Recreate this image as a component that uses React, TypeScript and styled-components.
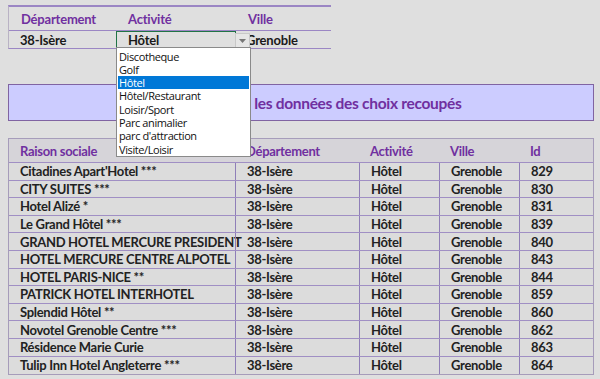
import React from "react";
import styled, { createGlobalStyle } from "styled-components";

const rows = [
  { name: "Citadines Apart'Hotel ***", id: 829 },
  { name: "CITY SUITES ***", id: 830 },
  { name: "Hotel Alizé *", id: 831 },
  { name: "Le Grand Hôtel ***", id: 839 },
  { name: "GRAND HOTEL MERCURE PRESIDENT", id: 840 },
  { name: "HOTEL MERCURE CENTRE ALPOTEL", id: 843 },
  { name: "HOTEL PARIS-NICE **", id: 844 },
  { name: "PATRICK HOTEL INTERHOTEL", id: 859 },
  { name: "Splendid Hôtel **", id: 860 },
  { name: "Novotel Grenoble Centre ***", id: 862 },
  { name: "Résidence Marie Curie", id: 863 },
  { name: "Tulip Inn Hotel Angleterre ***", id: 864 },
];

const choices = [
  "Discotheque",
  "Golf",
  "Hôtel",
  "Hôtel/Restaurant",
  "Loisir/Sport",
  "Parc animalier",
  "parc d'attraction",
  "Visite/Loisir",
];

function App() {
  return (
    <Sheet>
      <GlobalStyle />
      <Filters>
        <FilterHead>Département</FilterHead>
        <FilterHead>Activité</FilterHead>
        <FilterHead>Ville</FilterHead>
        <FilterCell>38-Isère</FilterCell>
        <FilterCell $active>
          Hôtel
          <DropButton>
            <svg width="7" height="4" viewBox="0 0 7 4">
              <path d="M0 0h7L3.5 4z" fill="#777" />
            </svg>
          </DropButton>
          <DropList>
            {choices.map((c) => (
              <DropItem key={c} $selected={c === "Hôtel"}>
                {c}
              </DropItem>
            ))}
          </DropList>
        </FilterCell>
        <FilterCell $tight>Grenoble</FilterCell>
      </Filters>

      <Banner>Extraire les données des choix recoupés</Banner>

      <Results>
        <Row $head>
          <Cell $head>Raison sociale</Cell>
          <Cell $head>Département</Cell>
          <Cell $head>Activité</Cell>
          <Cell $head>Ville</Cell>
          <Cell $head>Id</Cell>
        </Row>
        {rows.map((r) => (
          <Row key={r.id}>
            <Cell>{r.name}</Cell>
            <Cell $ruled>38-Isère</Cell>
            <Cell $ruled>Hôtel</Cell>
            <Cell $ruled>Grenoble</Cell>
            <Cell $ruled>{r.id}</Cell>
          </Row>
        ))}
      </Results>
    </Sheet>
  );
}

const GlobalStyle = createGlobalStyle`
  html, body {
    margin: 0;
    padding: 0;
    background: #dfdfdf;
  }
  body {
    font-family: Lato, "Liberation Sans", sans-serif;
  }
`;

const Sheet = styled.div`
  width: 600px;
  height: 379px;
  box-sizing: border-box;
  padding: 5px 6px 0 8px;
  display: flex;
  flex-direction: column;
  background: #dfdfdf;
  overflow: hidden;
`;

const Filters = styled.div`
  display: grid;
  grid-template-columns: 107px 120px 95px;
  grid-template-rows: 24px 17px;
  width: 322px;
  border-top: 2px solid #9b86c4;
  border-left: 1px solid #b9b2c4;
  border-bottom: 1px solid #9b86c4;
  position: relative;
  z-index: 2;
`;

const FilterHead = styled.div`
  display: flex;
  align-items: center;
  padding-left: 12px;
  color: #7030a0;
  font-weight: 700;
  font-size: 13px;
  letter-spacing: -0.2px;
  border-bottom: 1px solid #9b86c4;
`;

const FilterCell = styled.div<{ $active?: boolean; $tight?: boolean }>`
  position: relative;
  display: flex;
  align-items: center;
  padding-left: ${(p) => (p.$tight ? "10px" : "11px")};
  font-weight: 700;
  font-size: 13px;
  letter-spacing: -0.2px;
  color: #1a1a1a;
  box-sizing: border-box;
  border: ${(p) => (p.$active ? "1px solid #217346" : "none")};
`;

const DropButton = styled.div`
  position: absolute;
  z-index: 3;
  left: 100%;
  top: 1px;
  width: 15px;
  height: 15px;
  box-sizing: border-box;
  background: #e6e6e6;
  border: 1px solid #c8c8c8;
  border-bottom-color: #555;
  display: flex;
  align-items: center;
  justify-content: center;
`;

const DropList = styled.div`
  position: absolute;
  z-index: 3;
  left: -1px;
  top: 100%;
  width: 135px;
  height: 110px;
  box-sizing: border-box;
  background: #fff;
  border: 1px solid #8a8a8a;
  padding: 1.5px 1px 0;
  display: flex;
  flex-direction: column;
`;

const DropItem = styled.div<{ $selected?: boolean }>`
  height: 13.3px;
  line-height: 13.3px;
  padding-left: 1px;
  font-family: "Open Sans", "Noto Sans", sans-serif;
  font-size: 11px;
  font-weight: 400;
  letter-spacing: -0.4px;
  overflow: hidden;
  color: ${(p) => (p.$selected ? "#fff" : "#111")};
  background: ${(p) => (p.$selected ? "#0078d7" : "transparent")};
`;

const Banner = styled.div`
  margin-top: 35px;
  height: 37px;
  box-sizing: border-box;
  background: #ccccff;
  border: 1px solid #8064a2;
  display: flex;
  align-items: center;
  padding-left: 190px;
  color: #7030a0;
  font-weight: 700;
  font-size: 15.5px;
  letter-spacing: -0.3px;
`;

const Results = styled.div`
  margin-top: 17px;
  width: 586px;
  border: 1px solid #a69cba;
  box-sizing: border-box;
`;

const Row = styled.div<{ $head?: boolean }>`
  display: grid;
  grid-template-columns: 226px 124px 80px 80px 1fr;
  height: ${(p) => (p.$head ? "24px" : "17.6px")};
  background: ${(p) => (p.$head ? "#d6d4d9" : "#dcdcdc")};
  border-bottom: 1px solid #a08fc4;
  box-sizing: border-box;
  &:last-child {
    border-bottom: none;
  }
`;

const Cell = styled.div<{ $head?: boolean; $ruled?: boolean }>`
  display: flex;
  align-items: center;
  padding-left: 11px;
  font-size: 13px;
  font-weight: 700;
  letter-spacing: -0.3px;
  white-space: nowrap;
  color: ${(p) => (p.$head ? "#7030a0" : "#222")};
  border-left: ${(p) => (p.$ruled ? "1px solid #8f7fb8" : "none")};
`;

export default App;
